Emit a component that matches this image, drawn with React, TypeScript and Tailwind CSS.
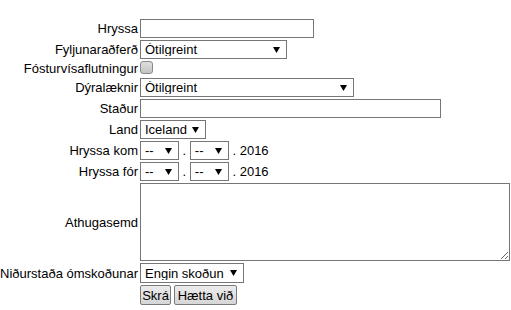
import React from 'react'

const font = "font-['Liberation_Sans',Arial,sans-serif]"

function Arrow() {
  return (
    <svg
      width="7"
      height="6"
      viewBox="0 0 7 6"
      className="pointer-events-none absolute right-[7px] top-1/2 -translate-y-1/2"
    >
      <polygon points="0,0 7,0 3.5,6" fill="#000" />
    </svg>
  )
}

function Select({ value, className }: { value: string; className: string }) {
  return (
    <span className={`relative block shrink-0 ${className}`}>
      <select
        defaultValue={value}
        className={`block h-full w-full appearance-none rounded-none border border-[#767676] bg-white py-0 pl-[4px] pr-[14px] text-[13px] leading-none text-black outline-none ${font}`}
      >
        <option>{value}</option>
      </select>
      <Arrow />
    </span>
  )
}

function Label({ children, className = '' }: { children: React.ReactNode; className?: string }) {
  return (
    <div className={`self-center whitespace-nowrap text-right text-[13px] leading-[15px] text-black ${className}`}>
      {children}
    </div>
  )
}

function DateRow() {
  return (
    <div className="flex h-[19px] items-center whitespace-pre text-[13px] text-black">
      <Select value="--" className="h-[19px] w-[39px]" />
      {' . '}
      <Select value="--" className="h-[19px] w-[39px]" />
      {' . 2016'}
    </div>
  )
}

export default function App() {
  return (
    <div className={`min-h-[310px] w-[511px] bg-white pt-[19px] ${font}`}>
      <div className="grid grid-cols-[138px_1fr] gap-x-[2px] gap-y-[2px]">
        <Label>Hryssa</Label>
        <div>
          <input
            type="text"
            className="block h-[19px] w-[174px] border border-[#767676] bg-white outline-none"
          />
        </div>

        <Label>Fyljunaraðferð</Label>
        <div className="flex">
          <Select value="Ótilgreint" className="h-[19px] w-[147px]" />
        </div>

        <Label className="self-start">Fósturvísaflutningur</Label>
        <div className="h-[15px]">
          <div className="h-[13px] w-[13px] rounded-[3px] border border-[#8a8a8a] bg-gradient-to-b from-[#dedede] to-[#c4c4c4]" />
        </div>

        <Label>Dýralæknir</Label>
        <div className="flex">
          <Select value="Ótilgreint" className="h-[19px] w-[214px]" />
        </div>

        <Label>Staður</Label>
        <div>
          <input
            type="text"
            className="block h-[19px] w-[301px] border border-[#767676] bg-white outline-none"
          />
        </div>

        <Label>Land</Label>
        <div className="flex">
          <Select value="Iceland" className="h-[19px] w-[66px]" />
        </div>

        <Label>Hryssa kom</Label>
        <DateRow />

        <Label>Hryssa fór</Label>
        <DateRow />

        <Label>Athugasemd</Label>
        <div>
          <textarea className="block h-[78px] w-[370px] border border-[#767676] bg-white outline-none" />
        </div>

        <Label>Niðurstaða ómskoðunar</Label>
        <div className="flex">
          <Select value="Engin skoðun" className="h-[20px] w-[104px]" />
        </div>

        <div />
        <div className="flex gap-[3px]">
          <button
            type="button"
            className="h-[20px] w-[31px] rounded-[2px] border border-[#7a7a7a] bg-gradient-to-b from-[#ececec] to-[#d6d6d6] p-0 text-center text-[13px] leading-none text-black"
          >
            Skrá
          </button>
          <button
            type="button"
            className="h-[20px] w-[63px] rounded-[2px] border border-[#7a7a7a] bg-gradient-to-b from-[#ececec] to-[#d6d6d6] p-0 text-center text-[13px] leading-none text-black"
          >
            Hætta við
          </button>
        </div>
      </div>
    </div>
  )
}
